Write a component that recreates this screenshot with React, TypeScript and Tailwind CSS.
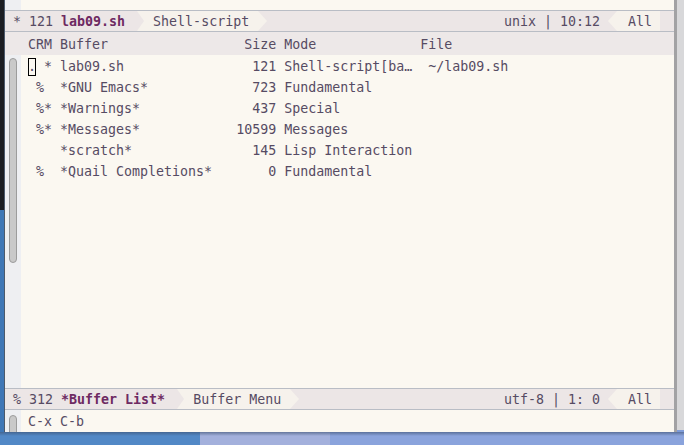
import React from "react";

const TXT = "text-[#564b63]";
const PURPLE = "text-[#6e2a62]";

function NotchL() {
  return (
    <svg width="7" height="20" viewBox="0 0 7 20" className="block shrink-0">
      <rect width="7" height="20" fill="#f6f2ec" />
      <polygon points="0,0 7,10 0,20" fill="#ece6e6" />
    </svg>
  );
}
function ArrowR() {
  return (
    <svg width="9" height="20" viewBox="0 0 9 20" className="block shrink-0">
      <rect width="9" height="20" fill="#ece6e6" />
      <polygon points="0,0 9,10 0,20" fill="#f6f2ec" />
    </svg>
  );
}
function ArrowL() {
  return (
    <svg width="9" height="20" viewBox="0 0 9 20" className="block shrink-0">
      <rect width="9" height="20" fill="#ece6e6" />
      <polygon points="9,0 0,10 9,20" fill="#f6f2ec" />
    </svg>
  );
}

function ModeLine({ left, bold, mode, right }: { left: string; bold: string; mode: string; right: string }) {
  return (
    <div className={`flex h-[20px] items-stretch bg-[#ece6e6] leading-[21px] whitespace-pre ${TXT}`}>
      <div className="pl-[8px]">
        {left}
        <span className={`font-bold ${PURPLE}`}>{bold}</span>
      </div>
      <div className="w-[12px] shrink-0" />
      <NotchL />
      <div className="bg-[#f6f2ec] px-[9px]">{mode}</div>
      <ArrowR />
      <div className="flex-1" />
      <div>{right}</div>
      <div className="w-[8px] shrink-0" />
      <ArrowL />
      <div className="bg-[#f6f2ec] pl-[11px] pr-[8px]">All</div>
      <div className="w-[14px] shrink-0" />
    </div>
  );
}

type RowT = { crm: string; name: string; size: string; mode: string; file?: string; cursor?: boolean; ell?: boolean };

const rows: RowT[] = [
  { crm: ". *", name: "lab09.sh", size: "121", mode: "Shell-script[ba", file: "~/lab09.sh", cursor: true, ell: true },
  { crm: " % ", name: "*GNU Emacs*", size: "723", mode: "Fundamental" },
  { crm: " %*", name: "*Warnings*", size: "437", mode: "Special" },
  { crm: " %*", name: "*Messages*", size: "10599", mode: "Messages" },
  { crm: "   ", name: "*scratch*", size: "145", mode: "Lisp Interaction" },
  { crm: " % ", name: "*Quail Completions*", size: "0", mode: "Fundamental" },
];

function Row({ r }: { r: RowT }) {
  const pre = (r.crm + " " + r.name).padEnd(31 - r.size.length) + r.size + " ";
  return (
    <div className="h-[21px] leading-[23px] whitespace-pre">
      {r.cursor ? (
        <>
          <span className="relative inline-block w-[8px]">
            .
            <span className="absolute left-0 top-[3px] h-[18px] w-[8px] border border-black" />
          </span>
          {pre.slice(1)}
        </>
      ) : (
        pre
      )}
      {r.mode}
      {r.ell ? <span className="inline-block w-[16px] text-left">…</span> : null}
      {r.file ? " " + r.file : ""}
    </div>
  );
}

function Thumb({ className }: { className: string }) {
  return <div className={`absolute left-[4px] w-[8px] rounded-full border border-[#9c9c9c] bg-[#c9c9c9] ${className}`} />;
}

export default function App() {
  const header = "CRM Buffer".padEnd(27) + "Size Mode".padEnd(22) + "File";
  return (
    <div className="relative h-[445px] w-[684px] overflow-hidden bg-[#7f9cd8] font-['DejaVu_Sans_Mono',monospace] text-[13.3px]">
      {/* desktop */}
      <div className="absolute left-0 top-0 h-[210px] w-[4px] bg-[#1b1d22]" />
      <div className="absolute left-0 top-[210px] h-[235px] w-[4px] bg-[#3f77b6]" />
      <div className="absolute left-0 top-[432px] h-[13px] w-[200px] bg-[#5288c6]" />
      <div className="absolute left-[200px] top-[432px] h-[13px] w-[130px] bg-[#a3b0dc]" />
      <div className="absolute left-[330px] top-[432px] h-[13px] w-[354px] bg-[#8aa3dc]" />
      <div className="absolute left-0 top-[432px] h-[4px] w-[684px] bg-gradient-to-b from-[#3b4f70]/60 to-transparent" />
      <div className="absolute right-0 top-0 h-[430px] w-[7px] bg-[#d8d8da]" />

      {/* emacs window */}
      <div className={`absolute left-[4px] top-0 flex h-[432px] w-[673px] flex-col border-l border-r-[3px] border-l-[#4c5a6c] border-r-[#a2a2a4] bg-[#fbf8f1] ${TXT}`}>
        <div className="flex h-[10px]">
          <div className="w-[16px] bg-[#eeeff2]" />
          <div className="flex-1" />
        </div>
        <div className="h-px bg-[#b9bdc5]" />
        <ModeLine left="* 121 " bold="lab09.sh" mode="Shell-script" right="unix | 10:12" />
        <div className="h-px bg-[#b9bdc5]" />
        <div className="h-[23px] bg-[#ede8e8] pl-[23px] leading-[25px] whitespace-pre">{header}</div>
        <div className="relative flex flex-1">
          <div className="relative w-[16px] bg-[#eeeff2]">
            <Thumb className="top-[3px] h-[205px]" />
          </div>
          <div className="flex-1 pl-[7px]">
            {rows.map((r, i) => (
              <Row key={i} r={r} />
            ))}
          </div>
        </div>
        <div className="h-px bg-[#b9bdc5]" />
        <ModeLine left="% 312 " bold="*Buffer List*" mode="Buffer Menu" right="utf-8 | 1: 0" />
        <div className="h-px bg-[#b9bdc5]" />
        <div className="flex h-[22px]">
          <div className="relative w-[16px] overflow-hidden bg-[#eeeff2]">
            <Thumb className="top-[5px] h-[30px]" />
          </div>
          <div className="flex-1 pl-[7px] leading-[23px] whitespace-pre">C-x C-b</div>
        </div>
      </div>
    </div>
  );
}
